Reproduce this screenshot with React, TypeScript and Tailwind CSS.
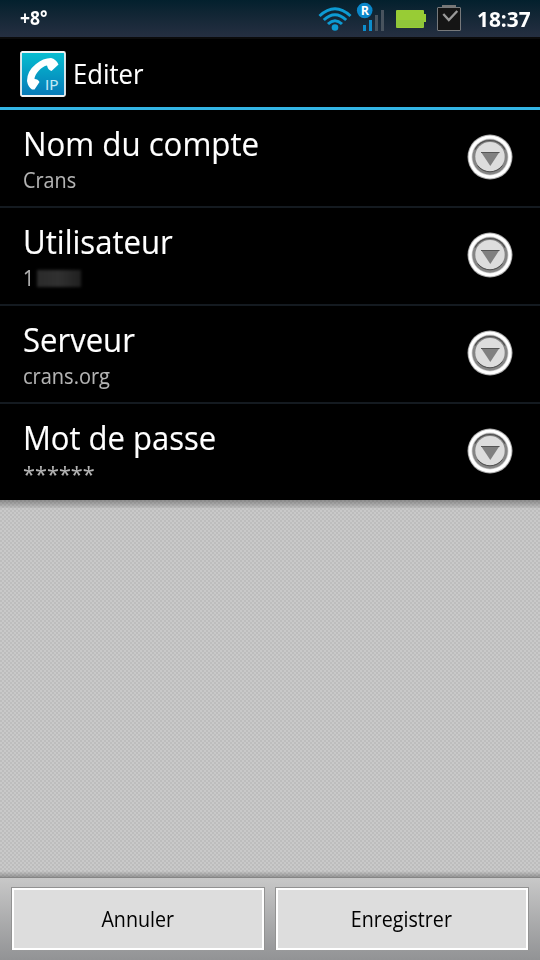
import React from 'react';

function StatusBar() {
  return (
    <div className="relative flex h-[37px] shrink-0 items-center bg-linear-to-b from-[#03202d] to-[#252f41] font-['Open_Sans',sans-serif] font-bold text-white">
      <span className="-mt-[2px] ml-[20px] inline-block w-[100px] origin-left scale-x-[0.92] text-[19px] leading-[36px]">+8°</span>
      <svg className="absolute top-0 left-[310px]" width="160" height="37" viewBox="0 0 160 37">
        <g fill="none" stroke="#0d9bd3" strokeWidth="3">
          <path d="M9.500 16 Q25 1.500 40.500 16" />
          <path d="M13.800 20 Q25 9.500 36.200 20" />
          <path d="M18 24 Q25 17.500 32 24" />
        </g>
        <circle cx="25" cy="27.500" r="3.300" fill="#0d9bd3" />
        <rect x="53" y="25" width="3" height="6" fill="#0d8dcc" />
        <rect x="59" y="20" width="3" height="11" fill="#0d8dcc" />
        <rect x="65" y="15" width="3" height="16" fill="#48535e" />
        <rect x="71" y="10" width="3" height="21" fill="#48535e" />
        <circle cx="54.700" cy="10.500" r="7.800" fill="#0a87ca" />
        <text x="54.800" y="15" textAnchor="middle" fontSize="12.500" fill="#fff">R</text>
        <path d="M87 10h26q1 0 1 1v3h2v8h-2v5q0 1-1 1h-26q-1 0-1-1v-16q0-1 1-1z" fill="#98cc35" />
        <rect x="86" y="20" width="28" height="7" fill="#8fc63a" />
        <rect x="132" y="5" width="14" height="2" fill="#777" />
        <rect x="127.500" y="7.500" width="23" height="23" rx=".5" fill="#151515" stroke="#77797b" />
        <path d="M133.300 14l5.500 6 8.500-9" fill="none" stroke="#9a9a9a" strokeWidth="2.300" />
      </svg>
      <span className="absolute top-[1px] left-[477px] origin-left scale-x-[0.97] text-[21.500px] leading-[36px]">18:37</span>
    </div>
  );
}

function PhoneIcon() {
  return (
    <svg className="mt-[2px] ml-[20px] shrink-0" width="46" height="46" viewBox="0 0 46 46">
      <defs>
        <linearGradient id="tile" x1="0" y1="0" x2="0" y2="1">
          <stop offset="0" stopColor="#06bfd1" />
          <stop offset="1" stopColor="#0679b7" />
        </linearGradient>
      </defs>
      <rect x="1" y="1" width="44" height="44" rx="1.500" fill="url(#tile)" stroke="#eef2f3" strokeWidth="1.800" />
      <path d="M12 38.500Q8 36 7 30Q7 20 16 13Q23 7 31 7Q36 8 38.500 13.500L31.500 20Q28 19 27 14.500Q23 15 18.500 20Q14.500 24.500 14.500 28Q18 28 19.500 31L14.500 38.500Z" fill="#fff" />
      <text x="25" y="39" fontSize="15" textLength="13.500" lengthAdjust="spacingAndGlyphs" fill="#c9ebf8" stroke="#c9ebf8" strokeWidth=".15" fontFamily="Open Sans, sans-serif">IP</text>
    </svg>
  );
}

function MoreIcon() {
  return (
    <svg className="mr-[27px] -mt-[3px] shrink-0" width="46" height="46" viewBox="0 0 46 46">
      <circle cx="23" cy="23" r="22.500" fill="#aaa" />
      <circle cx="23" cy="23" r="21.500" fill="#fff" />
      <circle cx="23" cy="23" r="18.500" fill="#d5d5d5" />
      <circle cx="23" cy="23" r="17.700" fill="#858585" />
      <path d="M8 15.500A17 17 0 0 1 38 15.500" fill="none" stroke="#4d4d4d" strokeWidth="1.200" />
      <circle cx="23" cy="22.700" r="14.700" fill="#ddd" />
      <path d="M10.500 31.500A15.500 15.500 0 0 0 35.500 31.500" fill="none" stroke="#505050" strokeWidth="1" />
      <path d="M14 18h18.500L23.300 32z" fill="#808080" />
      <path d="M14 18.500h18.500" stroke="#555" />
    </svg>
  );
}

const rows = [
  { title: 'Nom du compte', value: 'Crans', scale: 'scale-x-[0.946]', valueScale: 'scale-x-[0.92]' },
  { title: 'Utilisateur', value: '1', scale: 'scale-x-[0.943]', valueScale: 'scale-x-[0.92]', masked: true },
  { title: 'Serveur', value: 'crans.org', scale: 'scale-x-[0.941]', valueScale: 'scale-x-[0.93]' },
  { title: 'Mot de passe', value: '******', scale: 'scale-x-[0.939]', valueScale: 'scale-x-[1.01]' },
];

export default function App() {
  return (
    <div className="flex h-[960px] w-[540px] flex-col overflow-hidden bg-black font-['Open_Sans','Noto_Sans',sans-serif]">
      <StatusBar />
      <header className="flex h-[73px] shrink-0 items-center border-t-2 border-b-3 border-t-[#0b0b0b] border-b-[#33b5e5]">
        <PhoneIcon />
        <h1 className="mt-[2px] ml-[7px] origin-left scale-x-[0.95] text-[27px] leading-[40px] text-white [-webkit-text-stroke:0.1px_white]">Editer</h1>
      </header>
      <main className="flex flex-1 flex-col">
        <ul>
          {rows.map((r, i) => (
            <li key={r.title} className={'flex items-center justify-between ' + (i < 3 ? 'h-[98px] border-b-2 border-[#141a20]' : 'h-[96px]')}>
              <div className="ml-[23px]">
                <div className={'mt-[2px] origin-left text-[33px] leading-[42px] whitespace-nowrap text-white [-webkit-text-stroke:0.15px_white] ' + r.scale}>{r.title}</div>
                <div className="flex h-[30px] items-center">
                  <span className={'origin-left text-[21.500px] leading-[30px] text-[#b4b4b4] [-webkit-text-stroke:0.1px_#b4b4b4] ' + r.valueScale}>{r.value}</span>
                  {r.masked && <span className="ml-[2px] h-[17px] w-[44px] bg-linear-to-r from-[#2b2b2b] via-[#303030] to-[#202020] blur-[1.500px]" />}
                </div>
              </div>
              <MoreIcon />
            </li>
          ))}
        </ul>
        <div className="flex flex-1 flex-col justify-between bg-[repeating-conic-gradient(#c9c9c9_0%_25%,#bdbdbd_0%_50%)] bg-[length:4px_4px]">
          <div className="h-[8px] bg-linear-to-b from-black/30 to-black/5" />
          <div className="h-[6px] bg-linear-to-b from-transparent to-black/25" />
        </div>
      </main>
      <footer className="flex h-[83px] shrink-0 gap-[10px] border-t border-[#858585] bg-linear-to-b from-[#c8c8c8] to-[#929395] px-[11px] pt-[9px] text-[21.500px] text-black">
        {['Annuler', 'Enregistrer'].map((label) => (
          <button key={label} className="h-[63px] flex-1 border border-b-0 border-[#929292]">
            <span className="flex h-full items-center justify-center border-2 border-white bg-[#ddd]">
              <span className="-ml-[1px] scale-x-[0.915]">{label}</span>
            </span>
          </button>
        ))}
      </footer>
    </div>
  );
}
